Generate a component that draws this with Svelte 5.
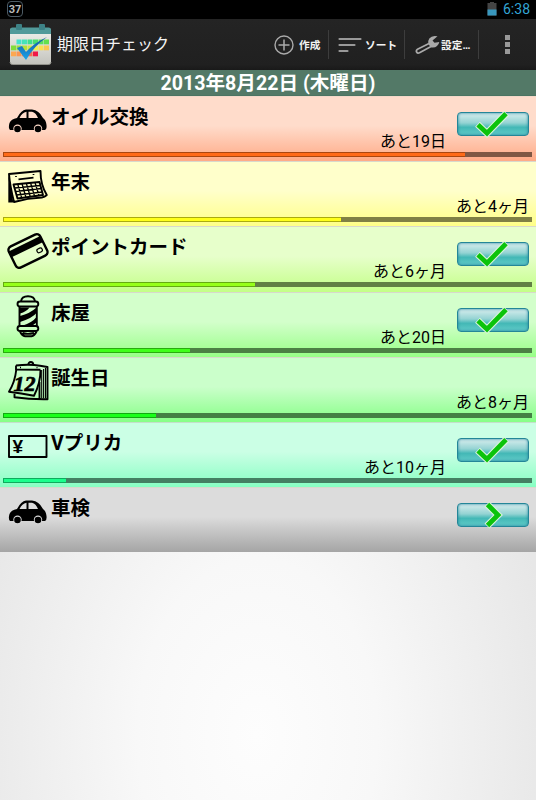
<script lang="ts">
  type Item = {
    title: string
    icon: 'car' | 'calendar' | 'card' | 'barber' | 'birthday' | 'yen'
    tone: string
    left?: string
    progress?: number
    action?: 'check' | 'next'
  }

  const ITEMS: Item[] = [
    { title: 'オイル交換', icon: 'car', tone: 'orange', left: 'あと19日', progress: 87.4, action: 'check' },
    { title: '年末', icon: 'calendar', tone: 'yellow', left: 'あと4ヶ月', progress: 63.9 },
    { title: 'ポイントカード', icon: 'card', tone: 'lime', left: 'あと6ヶ月', progress: 47.7, action: 'check' },
    { title: '床屋', icon: 'barber', tone: 'green', left: 'あと20日', progress: 35.3, action: 'check' },
    { title: '誕生日', icon: 'birthday', tone: 'pure', left: 'あと8ヶ月', progress: 29 },
    { title: 'Vプリカ', icon: 'yen', tone: 'mint', left: 'あと10ヶ月', progress: 11.9, action: 'check' },
    { title: '車検', icon: 'car', tone: 'gray', action: 'next' },
  ]

  // app icon cells: [x, y, colour]
  const CELLS: [number, number, string][] = [
    [7.5, 15.5, '#45e3cd'], [13, 15.5, '#45e3b8'], [18.5, 15.5, '#40e08c'], [24, 15.5, '#48df6c'], [29.5, 15.5, '#58e05c'], [35, 15.5, '#63e04c'],
    [2, 21.5, '#82dc3c'], [7.5, 21.5, '#98e044'], [13, 21.5, '#b5e23a'], [18.5, 21.5, '#d4e640'], [24, 21.5, '#f0ee50'], [29.5, 21.5, '#fae050'], [35, 21.5, '#fbc850'],
    [2, 27.5, '#fda850'], [7.5, 27.5, '#fb9550'], [13, 27.5, '#fb8050'], [18.5, 27.5, '#f96a50'], [24, 27.5, '#f01848'],
  ]
</script>

<div class="screen">
  <div class="status">
    <span class="badge">37</span>
    <div class="right">
      <svg width="10" height="15" viewBox="0 0 10 15">
        <path d="M3 1h4v1h2.500v12.500h-9V2H3z" fill="#444" />
        <path d="M.5 8.500h9v6h-9z" fill="#3897bd" />
      </svg>
      <span class="clock">6:38</span>
    </div>
  </div>

  <header>
    <svg class="logo" width="43" height="41" viewBox="0 0 43 41">
      <defs>
        <linearGradient id="paper" x1="0" y1="0" x2="0" y2="1">
          <stop offset="0" stop-color="#f2f2ee" /><stop offset="1" stop-color="#c3c3bd" />
        </linearGradient>
        <linearGradient id="tick" x1="0" y1="0" x2="0" y2="1">
          <stop offset="0" stop-color="#1457a0" /><stop offset="1" stop-color="#1ba4ea" />
        </linearGradient>
      </defs>
      <rect x="1" y="4" width="41" height="36.500" rx="2.500" fill="url(#paper)" />
      <path d="M1 10V6q0-2.500 2.500-2.500h36Q42 3.500 42 6v4z" fill="#519a9a" />
      <path d="M1 38q0 2.500 2.500 2.500h36q2.500 0 2.500-2.500" fill="none" stroke="#92928b" />
      <rect x="7" y="0" width="6" height="6" rx="1" fill="#3d8286" />
      <rect x="30" y="0" width="6" height="6" rx="1" fill="#3d8286" />
      {#each CELLS as [x, y, fill]}
        <rect {x} {y} width="5" height="4.800" {fill} />
      {/each}
      <path d="M8 24l5-2 4 6q8-9 21-15-13 9-21 23z" fill="url(#tick)" />
    </svg>
    <h1>期限日チェック</h1>

    <nav>
      <button class="create">
        <svg width="20" height="20" viewBox="0 0 20 20" fill="none" stroke="#aaa">
          <circle cx="10" cy="10" r="9" stroke-width="1.400" />
          <path d="M10 4.500v11M4.500 10h11" stroke-width="1.500" />
        </svg>
        作成
      </button>
      <button class="sort">
        <svg width="24" height="16" viewBox="0 0 24 16" stroke="#999" stroke-width="2.200" stroke-linecap="round">
          <path d="M1.500 2h21M1.500 8h15M1.500 14h8" />
        </svg>
        ソート
      </button>
      <button class="settings">
        <svg width="25" height="20" viewBox="0 0 25 20">
          <path d="M14 8.500L2.500 14.300Q.8 15.500 1.600 17 2.600 18.800 4.500 17.800L16 11.500" fill="none" stroke="#aaa" stroke-width="1.700" stroke-linejoin="round" />
          <path d="M22.500 1.300Q17 0 14.300 3.500 12.700 5.800 13.300 9l2.500 3.300q4 .8 6.200-1.300 2-1.700 2.300-4l-4.800.8-2-2.300z" fill="#aaa" />
        </svg>
        設定…
      </button>
      <button class="more" aria-label="メニュー"><i></i><i></i><i></i></button>
    </nav>
  </header>

  <div class="date">2013年8月22日 (木曜日)</div>

  <ul>
    {#each ITEMS as item}
      <li class={item.tone}>
        <div class="body">
          <svg class="icon" width="41" height="42" viewBox="0 0 41 42">
            {#if item.icon === 'car'}
              <path d="M2 29Q0 27 1.500 22 3 18 9 17q4-8 9-8.500h6q7 .5 11 8.500 3 2 3.500 7 .5 4-1.500 5z" />
              <path d="M11.500 17q2.500-5.500 7-6.300V17zM20.500 10.700h3.500q4 1 6 6.300h-9.500z" class="cut" />
              <circle cx="9.500" cy="27.700" r="4.200" class="cut" /><circle cx="30" cy="27.700" r="4.200" class="cut" />
              <circle cx="9.500" cy="28" r="3.300" /><circle cx="30" cy="28" r="3.300" />
            {:else if item.icon === 'calendar'}
              <path d="M.3 8v28.500h5Z" />
              <g class="line">
                <path d="M1 8L32.500 5Q32.500 19 38.800 29q-2 2-5 2.500-14 .5-27.800 4.500Q2 20 1 8z" />
                <path d="M5.500 18.500l26-2.500 3.500 13-25.500 3.500z" />
                <path d="M6.500 22l26-2.500M7.500 25.500l26-3M8.500 29l26-3M9.700 18l4 14M14 17.700l4 13.800M18.300 17.300l4 13.500M22.600 17l4 13.300M27 16.500l4 13.300" stroke-width="1.300" />
                <path d="M10.500 13.300l15-1.700M8 10v1M25.500 8v1" stroke-width="1.700" />
              </g>
            {:else if item.icon === 'card'}
              <g transform="rotate(-26 20 20)">
                <rect x="2.500" y="8.300" width="35" height="23.400" rx="4" class="line heavy" />
                <path d="M3 12h34v6.500H3z" />
                <rect x="28" y="22.500" width="5.500" height="4" rx="1.800" class="line thin" />
              </g>
            {:else if item.icon === 'barber'}
              <g class="line">
                <path d="M13 4.500Q13.500-.8 20-.8t7 5.300" />
                <path d="M11.500 9.500v20M28.800 9.500v20" />
                <rect x="9.500" y="4.500" width="20.800" height="5" rx="2.500" />
                <rect x="9.500" y="29" width="20.800" height="5" rx="2.500" />
                <path d="M12 34.500q2 4.500 5 4.700h6.500q3-.2 5-4.700M14.500 36q5 1.700 11.500 0" />
              </g>
              <path d="M12 10.500h9.500q-3 4-9.500 6zM28.500 10.500v5.500q-4 5-16.500 9v-6Q22 16.500 28.500 10.500zM28.500 20v5.500Q26 28 22 29h-8.500Q24 26 28.500 20z" />
            {:else if item.icon === 'birthday'}
              <g class="line">
                <path d="M8.300 7.500Q7 20 1 29.700q12 1.300 25 4Q32.500 21 32.500 8" />
                <path d="M8 3.500q14-1.500 24 .3L39.500 5v32.200q-17 .3-33-2v-3.500M8 3.500v4l24.500.3M31.500 20v17" />
                <path d="M33.700 8v28.500M35.600 7v29.500M37.500 6v30.500" stroke-width="1.100" />
                <path d="M20.300 3q0-3 2.500-3t2.500 3" />
                <path d="M12 5.500h1M28.500 5.700h1" stroke-width="1.300" />
              </g>
              <text x="5.500" y="28.500" class="twelve">12</text>
            {:else}
              <rect x="1" y="9" width="37.500" height="21" class="line" />
              <text x="4.500" y="25.700" class="yen">¥</text>
            {/if}
          </svg>
          <div class="info">
            <h2>{item.title}</h2>
            {#if item.left}<p>{item.left}</p>{/if}
          </div>
          {#if item.action}
            <button class="action" aria-label={item.action}>
              <svg width="72" height="30" viewBox="0 0 72 30">
                {#if item.action === 'check'}
                  <path d="M20.500 15.200l9.500 9L49.500 4.200" />
                  <path d="M21 15.700l9 8.500L49 4.700" class="top" />
                {:else}
                  <path d="M30 4l11 11-11 11" />
                  <path d="M30.500 4.500L41 15 30.500 25.500" class="top" />
                {/if}
              </svg>
            </button>
          {/if}
        </div>
        {#if item.progress}
          <div class="track"><div class="fill" style="width:{item.progress}%"></div></div>
        {/if}
      </li>
    {/each}
  </ul>
</div>

<style>
  :global(body) { margin: 0; background: #000; }
  .screen {
    width: 536px; height: 800px; overflow: hidden;
    display: flex; flex-direction: column;
    font-family: Roboto, "Noto Sans CJK JP", sans-serif;
    color: #000;
    background: radial-gradient(ellipse 300px 440px at 257px 735px, #fdfdfd, #f8f8f8 40%, #e7e7e7);
  }
  h1, h2, p, ul { margin: 0; padding: 0; font-weight: normal; }
  button { border: 0; padding: 0; background: none; font-family: inherit; color: inherit; }

  .status {
    flex: none; height: 19px; padding: 0 6px 0 7px; background: #000;
    display: flex; align-items: center; justify-content: space-between;
  }
  .badge {
    box-sizing: border-box; width: 16px; height: 16px; margin-bottom: 2px;
    border: 1px solid #4d5b64; border-radius: 4px;
    font: bold 11px/15px Roboto, sans-serif; color: #bbb; text-align: center;
  }
  .right { display: flex; align-items: center; gap: 6px; }
  .right svg { margin-bottom: 3px; }
  .clock { margin-bottom: 1px; font-size: 14px; line-height: 18px; color: #33a5d5; }

  header {
    flex: none; box-sizing: border-box; height: 51px; padding-left: 9px;
    display: flex; align-items: center;
    background: linear-gradient(#242424, #202020 90%, #191919);
    color: #f3f3f3;
  }
  .logo { margin-bottom: 1px; }
  h1 { margin-left: 5px; font-size: 16px; line-height: 24px; white-space: nowrap; }
  nav { margin-left: auto; display: flex; align-items: center; }
  nav button {
    box-sizing: border-box; height: 29px; border-right: 1px solid #3d3d3d;
    display: flex; align-items: center; white-space: nowrap;
    font-size: 10.700px; font-weight: bold;
  }
  .create { width: 55px; gap: 5px; }
  .sort { width: 76px; padding-left: 9px; gap: 3px; }
  .settings { width: 74px; padding-left: 10px; gap: 1px; }
  nav .more {
    width: 57px; border: 0; flex-direction: column; justify-content: center; gap: 2px;
  }
  .more i { width: 5px; height: 5px; background: #999; }

  .date {
    flex: none; box-sizing: border-box; height: 26px; border-bottom: 1px solid #4b7462;
    background: #537967; color: #fff; text-align: center;
    font-size: 19.600px; line-height: 28px; font-weight: bold;
  }

  ul { list-style: none; }
  li {
    --top: #ffdccb; --end: #ffaa87; --bar: #ff6a19; --track: #805744;
    box-sizing: border-box; height: 65.200px; border-top: 1px solid #d8d9cc;
    background: linear-gradient(var(--top) 45%, var(--end)) padding-box;
    display: flex; flex-direction: column;
  }
  .orange { border-top-color: #f3d8c9; }
  .yellow { --top: #ffffcb; --end: #ffff87; --bar: #ffff19; --track: #808044; }
  .lime { --top: #e7ffcb; --end: #c3ff87; --bar: #96ff19; --track: #628044; }
  .green { --top: #d3ffcb; --end: #98ff87; --bar: #3fff19; --track: #4c8044; }
  .pure { --top: #cbffcb; --end: #87ff87; --bar: #19ff19; --track: #448044; }
  .mint { --top: #cbffe5; --end: #87ffc3; --bar: #19ff8c; --track: #448062; border-top-color: #c5dfcb; }
  .gray { --top: #dcdcdc; --end: #a5a5a5; }

  .body { flex: none; height: 55px; padding: 0 7px 0 8px; display: flex; }
  .icon { flex: none; margin-top: 4px; overflow: visible; }
  .cut { fill: var(--top); }
  .line { fill: none; stroke: #000; stroke-width: 1.900; stroke-linejoin: round; }
  .heavy { stroke-width: 2.400; }
  .thin { stroke-width: 1.200; }
  .twelve { font: italic bold 22px "Liberation Serif", serif; stroke: #000; stroke-width: .7; }
  .yen { font: bold 19px "Liberation Sans", sans-serif; }

  .info { flex: 1; display: flex; flex-direction: column; margin: 6px 0 0 2px; }
  h2 { font-size: 19.500px; line-height: 29px; font-weight: bold; }
  p { font-size: 16px; line-height: 20px; text-align: right; }

  .action {
    flex: none; box-sizing: border-box; width: 72px; height: 24px; margin: 15px 0 0 11px;
    border: 1.500px solid #248698; border-radius: 4px;
    background: linear-gradient(#d8eeee, #94d3d3 45%, #43b8b6 65%, #61cbc8);
    box-shadow: inset 0 0 3px #217f99;
    display: flex; align-items: center; justify-content: center;
  }
  .action svg { flex: none; overflow: visible; }
  .action path { fill: none; stroke: #d9f3dc; stroke-width: 7; }
  .action .top { stroke: #0bc30b; stroke-width: 4.800; }

  .track { height: 5px; margin: 0 4px 0 3px; background: var(--track); }
  .fill { box-sizing: border-box; height: 5px; background: var(--bar); border: 1px solid #0005; border-right: 0; }
</style>
